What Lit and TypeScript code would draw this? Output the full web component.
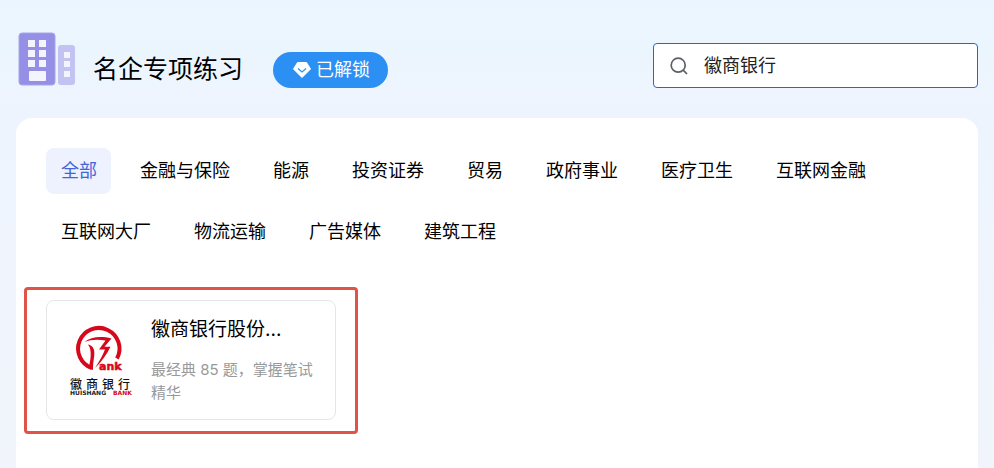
import { LitElement, html, css } from "lit";
import { customElement, state } from "lit/decorators.js";

const CATEGORIES = [
  "全部", "金融与保险", "能源", "投资证券", "贸易", "政府事业", "医疗卫生",
  "互联网金融", "互联网大厂", "物流运输", "广告媒体", "建筑工程",
];

@customElement("company-card")
class CompanyCard extends LitElement {
  static styles = css`
    :host {
      display: block;
      position: relative;
      width: 290px;
    }
    .card {
      box-sizing: border-box;
      display: flex;
      align-items: center;
      gap: 18px;
      min-height: 120px;
      padding: 15px 20px 15px 22px;
      border: 1px solid #e4e7ea;
      border-radius: 8px;
      background: #fff;
      color: #000;
      text-decoration: none;
    }
    .logo {
      flex: none;
      width: 64px;
      height: 74px;
    }
    .info {
      flex: 1;
      min-width: 0;
    }
    .name {
      margin: 0 0 14px;
      font-size: 19px;
      line-height: 28px;
      font-weight: 400;
      white-space: nowrap;
    }
    .desc {
      margin: 0;
      font-size: 15px;
      line-height: 23px;
      color: #999;
    }
    .mark {
      position: absolute;
      inset: -13px -22px -14px;
      border: 3px solid #df5349;
      border-radius: 4px;
      pointer-events: none;
    }
    .cn {
      font: 500 12px "Noto Sans CJK SC", sans-serif;
      fill: #111;
    }
    .ank {
      font: 900 11px "DejaVu Sans", sans-serif;
      fill: #d7071c;
      stroke: #d7071c;
      stroke-width: 0.5px;
    }
    .en {
      font: 700 6px "DejaVu Sans", sans-serif;
      fill: #222;
    }
    .red {
      fill: #d7071c;
    }
  `;

  render() {
    return html`
      <a class="card" href="#huishang">
        <svg class="logo" viewBox="14 8 64 74" role="img" aria-label="徽商银行">
          <path d="M37 53.2A20.7 20.7 0 1 1 62 43.5" fill="none" stroke="#d7071c" stroke-width="4" />
          <path class="red" d="M29.5 27C36 21.5 46 20.8 56.5 23.4L49.5 31.8L55.5 31.8C52 39 47 46.5 40 53C44.5 46 47.5 40.5 50 34.4L44 34.4L50.5 25.6C43 24 36 24.5 29.5 27Z" />
          <path class="red" d="M33 29.5C38.5 30.5 40 35 39.2 41C38.6 46 37.8 50 38 55L33.5 53C35.5 46 37.5 35 33 29.5Z" />
          <text class="ank" x="44" y="55">ank</text>
          <text class="cn" x="15 31 47 63" y="74">徽商银行</text>
          <text class="en" x="15" y="80">HUISHANG</text>
          <text class="en red" x="58" y="80">BANK</text>
        </svg>
        <div class="info">
          <h2 class="name">徽商银行股份...</h2>
          <p class="desc">最经典 85 题，掌握笔试精华</p>
        </div>
      </a>
      <div class="mark"></div>
    `;
  }
}

@customElement("app-root")
class AppRoot extends LitElement {
  @state() private active = "全部";

  static styles = css`
    :host {
      box-sizing: border-box;
      display: flex;
      flex-direction: column;
      min-height: 100vh;
      padding: 0 16px;
      background: linear-gradient(180deg, #eaf6ff 0, #eef4fe 120px, #f1f4fb 100%);
      font-family: Inter, "Noto Sans CJK SC", sans-serif;
      color: #000;
    }
    header {
      display: flex;
      align-items: flex-end;
      padding: 32px 0 30px;
    }
    .building {
      flex: none;
      width: 60px;
      height: 56px;
    }
    h1 {
      margin: 0 30px 0 17px;
      font-size: 25px;
      line-height: 38px;
      font-weight: 400;
      white-space: nowrap;
    }
    .unlock {
      display: flex;
      align-items: center;
      gap: 5px;
      height: 36px;
      padding: 0 18px 0 20px;
      border: 0;
      border-radius: 18px;
      background: #2c8ff3;
      color: #fff;
      font: inherit;
      font-size: 18px;
      line-height: 36px;
      white-space: nowrap;
    }
    .gem {
      width: 18px;
      height: 16px;
    }
    .search {
      box-sizing: border-box;
      display: flex;
      align-items: center;
      gap: 16px;
      width: 325px;
      height: 45px;
      margin-left: auto;
      padding: 0 16px;
      border: 1px solid #2b66c0;
      border-radius: 4px;
      background: #fff;
    }
    .lens {
      flex: none;
      width: 18px;
      height: 18px;
    }
    .search input {
      flex: 1;
      min-width: 0;
      padding: 0;
      border: 0;
      outline: 0;
      background: none;
      font: inherit;
      font-size: 18px;
      line-height: 28px;
      color: #222;
    }
    main {
      flex: 1;
      padding: 30px;
      border-radius: 16px 16px 0 0;
      background: #fff;
    }
    nav {
      display: flex;
      flex-wrap: wrap;
      gap: 15px 14px;
      margin-bottom: 45px;
    }
    .tab {
      height: 46px;
      padding: 0 14px 0 15px;
      border: 0;
      border-radius: 8px;
      background: none;
      font: inherit;
      font-size: 18px;
      line-height: 46px;
      color: #000;
      white-space: nowrap;
      cursor: pointer;
    }
    .tab[aria-pressed="true"] {
      background: #eef2ff;
      color: #4265d6;
    }
  `;

  render() {
    return html`
      <header>
        <svg class="building" viewBox="0 0 60 56" aria-hidden="true">
          <rect x="42" y="13" width="17" height="40" rx="3" fill="#c3c3f3" />
          <rect x="3" y="1" width="36" height="52" rx="3" fill="#958fe5" stroke="#a9a5eb" />
          <g fill="#f4f4ff">
            <rect x="12" y="8" width="7" height="7" /><rect x="23" y="8" width="7" height="7" />
            <rect x="12" y="18" width="7" height="7" /><rect x="23" y="18" width="7" height="7" />
            <rect x="12" y="28" width="7" height="7" /><rect x="23" y="28" width="7" height="7" />
            <rect x="13" y="39" width="17" height="10" rx="1" />
            <rect x="48" y="20" width="6" height="6" /><rect x="48" y="29" width="6" height="6" />
            <rect x="48" y="39" width="6" height="6" />
          </g>
        </svg>
        <h1>名企专项练习</h1>
        <button class="unlock">
          <svg class="gem" viewBox="0 0 18 16" aria-hidden="true">
            <path d="M4.5 .5H13.5L17.5 7L9 15.5L.5 7Z" fill="#fff" stroke="#fff" stroke-linejoin="round" />
            <path d="M5 6.5L9 10L13 6.5" fill="none" stroke="#2c8ff3" stroke-width="1.2" />
          </svg>
          <span>已解锁</span>
        </button>
        <label class="search">
          <svg class="lens" viewBox="0 0 18 18" fill="none" stroke="#5c6066" stroke-width="1.7" aria-hidden="true">
            <circle cx="8.2" cy="8.2" r="7" />
            <path d="M13.2 13.2L17 17" />
          </svg>
          <input type="text" aria-label="搜索企业" value="徽商银行" />
        </label>
      </header>
      <main>
        <nav aria-label="行业分类">
          ${CATEGORIES.map(
            (name) => html`<button
              class="tab"
              aria-pressed=${name === this.active ? "true" : "false"}
              @click=${() => (this.active = name)}
            >${name}</button>`
          )}
        </nav>
        <company-card></company-card>
      </main>
    `;
  }
}
